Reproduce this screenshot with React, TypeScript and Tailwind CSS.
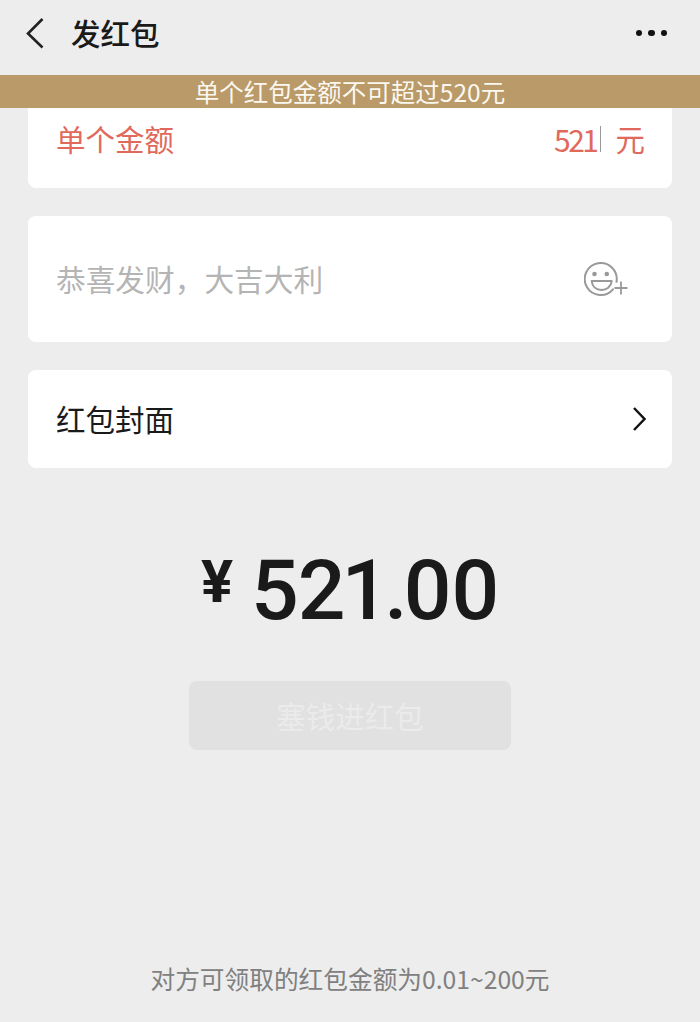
const font = { fontFamily: '"Noto Sans CJK SC", sans-serif' };

function SmileyPlus() {
  return (
    <svg width="46" height="36" viewBox="0 0 46 36" fill="none" stroke="#999" strokeWidth="2" className="shrink-0">
      <path d="M32.5 20.8 A16 16 0 1 0 29 28.3" strokeLinecap="round" />
      <circle cx="10.5" cy="13" r="2.3" fill="#999" stroke="none" />
      <circle cx="22.8" cy="13" r="2.3" fill="#999" stroke="none" />
      <path d="M7.7 20 H27.7 C27 26 22.5 29 17.7 29 C12.5 29 8.4 26 7.7 20 Z" strokeLinejoin="round" />
      <path d="M37 20.5 V33.5 M30.5 27 H43.5" strokeWidth="1.8" />
    </svg>
  );
}

export default function App() {
  return (
    <div className="w-[700px] h-[1022px] bg-[#ededed] flex flex-col overflow-hidden" style={font}>
      {/* header */}
      <div className="h-[75px] flex items-center justify-between pl-[25px] pr-[33px] pb-[9px]">
        <div className="flex items-center gap-[27px]">
          <svg width="19" height="32" viewBox="0 0 19 32" fill="none" stroke="#222" strokeWidth="2.6" className="shrink-0">
            <path d="M17.5 2 L3 16.5 L17.5 30.5" />
          </svg>
          <h1 className="text-[29.5px] font-medium leading-none text-[#1a1a1a]">发红包</h1>
        </div>
        <div className="flex items-center gap-[6px]">
          <span className="w-[6.5px] h-[6.5px] rounded-full bg-[#111]" />
          <span className="w-[6.5px] h-[6.5px] rounded-full bg-[#111]" />
          <span className="w-[6.5px] h-[6.5px] rounded-full bg-[#111]" />
        </div>
      </div>

      {/* warning banner */}
      <div className="h-[33px] bg-[#b99a68] flex items-center justify-center pt-[1px] text-[24.5px] leading-none text-[#fbf8f0]">
        单个红包金额不可超过520元
      </div>

      <div className="px-[28px] flex flex-col">
        <div className="h-[80px] bg-white rounded-b-lg flex items-center justify-between pl-[28px] pr-[27px] pb-[19px] text-[29.5px] leading-none text-[#e0695c]">
          <span>单个金额</span>
          <div className="flex items-center">
            <span className="text-[30px] tracking-[-2.5px]">521</span>
            <span className="w-px h-[26px] bg-[#999] ml-[4px] mr-[14px]" />
            <span>元</span>
          </div>
        </div>

        <div className="h-[126px] mt-[28px] bg-white rounded-lg flex items-center justify-between pl-[28px] pr-[42px] text-[29.7px] leading-none text-[#b4b4b4]">
          <span>恭喜发财，大吉大利</span>
          <SmileyPlus />
        </div>

        <div className="h-[98px] mt-[28px] bg-white rounded-lg flex items-center justify-between pl-[28px] pr-[26px] text-[29.5px] leading-none text-[#1a1a1a]">
          <span>红包封面</span>
          <svg width="14" height="26" viewBox="0 0 14 26" fill="none" stroke="#111" strokeWidth="2.4" className="shrink-0">
            <path d="M2 2 L12.5 13 L2 24" />
          </svg>
        </div>
      </div>

      {/* amount */}
      <div className="mt-[78px] h-[90px] flex items-start justify-center text-[#1a1a1a]" style={{ fontFamily: "Roboto, sans-serif" }}>
        <span className="text-[60px] font-bold leading-none mt-[6px] mr-[18px]">¥</span>
        <span className="text-[84px] font-medium leading-[90px]">
          <span className="tracking-[-1px]">5</span><span className="tracking-[-4px]">2</span><span className="tracking-[-5px]">1</span><span className="tracking-[-4px]">.</span>00
        </span>
      </div>

      <div className="mt-[45px] mx-auto w-[322px] h-[69px] bg-[#e1e1e1] rounded-lg flex items-center justify-center text-[29.5px] leading-none text-[#ebebeb]">
        塞钱进红包
      </div>

      <p className="mt-[216px] text-center text-[24.7px] leading-none text-[#808080]">
        对方可领取的红包金额为0.01~200元
      </p>
    </div>
  );
}
